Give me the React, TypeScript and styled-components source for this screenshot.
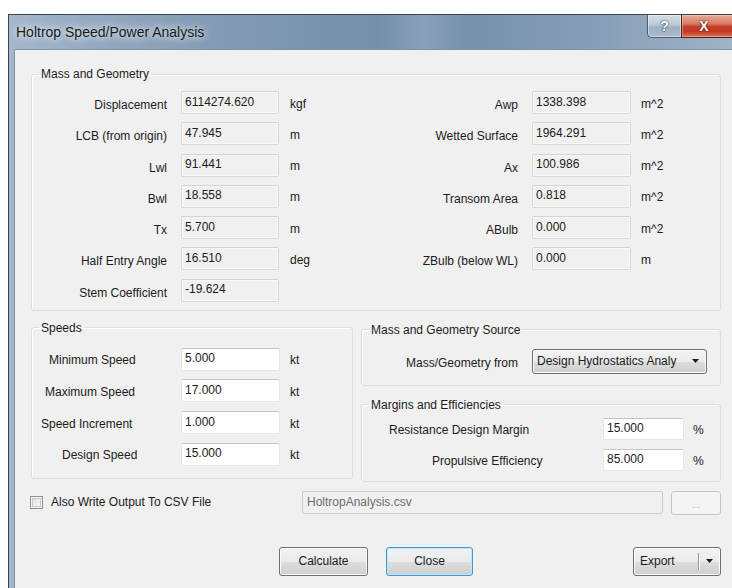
import React from "react";
import styled, { createGlobalStyle } from "styled-components";

const GlobalStyle = createGlobalStyle`
  html, body { margin: 0; padding: 0; background: #ffffff; }
  body {
    width: 732px;
    height: 588px;
    overflow: hidden;
    font-family: "Liberation Sans", Arial, sans-serif;
    font-size: 12px;
    color: #1b1b1b;
  }
  input, button { font-family: inherit; font-size: 12px; }
`;

const Desktop = styled.div`
  padding: 14px 0 0 8px;
  height: 574px;
  overflow: hidden;
`;

const Window = styled.div`
  width: 740px;
  height: 600px;
  border-top: 1px solid #3b434c;
  border-left: 1px solid #3b434c;
  background: linear-gradient(
    to right,
    #a4b8cc 0%,
    #93a9c0 12%,
    #8199b2 30%,
    #7690aa 50%,
    #88a0b8 56%,
    #7891ab 62%,
    #859db5 78%,
    #a2b6ca 100%
  );
  display: flex;
  flex-direction: column;
`;

const TitleBar = styled.div`
  height: 34px;
  display: flex;
  align-items: center;
  padding-left: 7px;
  flex: none;
`;

const Caption = styled.span`
  font-size: 14px;
  color: #1a1a1a;
  text-shadow: 0 0 6px rgba(255, 255, 255, 0.9), 0 0 12px rgba(255, 255, 255, 0.7);
  white-space: nowrap;
`;

const CaptionButtons = styled.div`
  margin-left: auto;
  margin-right: 12px;
  align-self: flex-start;
  display: flex;
`;

const HelpButton = styled.div`
  width: 34px;
  height: 23px;
  box-sizing: border-box;
  border: 1px solid #4f5e6e;
  border-top: none;
  border-right: none;
  border-bottom-left-radius: 5px;
  background: linear-gradient(#d6dee7 0%, #bac8d6 45%, #9eb0c2 55%, #a9bbcc 100%);
  box-shadow: inset 0 0 0 1px rgba(255, 255, 255, 0.45);
  display: flex;
  align-items: center;
  justify-content: center;
  color: #ffffff;
  font-weight: bold;
  font-size: 14px;
  text-shadow: 0 0 2px #2d3a48, 0 0 1px #2d3a48;
`;

const CloseButton = styled.div`
  width: 56px;
  height: 23px;
  box-sizing: border-box;
  border: 1px solid #5a1d12;
  border-top: none;
  background: linear-gradient(#e6ad9c 0%, #d77a62 40%, #c4402a 52%, #c23a22 75%, #d7765a 100%);
  box-shadow: inset 0 0 0 1px rgba(255, 220, 210, 0.4);
  display: flex;
  align-items: center;
  justify-content: center;
  padding-right: 10px;
  color: #ffffff;
  font-weight: bold;
  font-size: 14px;
  text-shadow: 0 0 2px #4a1208, 0 0 1px #4a1208;
`;

const Client = styled.div`
  margin-left: 5px;
  flex: 1;
  background: #f0f0f0;
  border-top: 1px solid #7f92a6;
  border-left: 1px solid #7f92a6;
`;

const Content = styled.div`
  width: 690px;
  padding: 17px 0 0 16px;
  display: flex;
  flex-direction: column;
`;

const Group = styled.fieldset<{ $pt: number; $pb: number }>`
  margin: 0;
  min-width: 0;
  padding: ${(p) => p.$pt}px 0 ${(p) => p.$pb}px;
  border: 1px solid #d5dfe5;
  border-radius: 3px;
  box-shadow: inset 1px 1px 0 #ffffff;
`;

const Legend = styled.legend`
  margin-left: 7px;
  padding: 0 2px;
  line-height: 14px;
  font-size: 12px;
  color: #1b1b1b;
`;

const GeoColumns = styled.div`
  display: flex;
  align-items: flex-start;
`;

const FieldGrid = styled.div<{ $label: number; $input: number; $unit: number; $rowGap: number }>`
  display: grid;
  grid-template-columns: ${(p) => p.$label}px ${(p) => p.$input}px ${(p) => p.$unit}px;
  row-gap: ${(p) => p.$rowGap}px;
  align-items: center;
`;

/* Right-aligned labels sit a little low against their boxes; indented ones are centred. */
const Label = styled.span<{ $indent?: number }>`
  white-space: nowrap;
  ${(p) =>
    p.$indent !== undefined
      ? `text-align: left; padding-left: ${p.$indent}px; padding-top: 2px;`
      : `text-align: right; padding-right: 14px; padding-top: 5px;`}
`;

const Unit = styled.span<{ $pad: number }>`
  padding-left: ${(p) => p.$pad}px;
  padding-top: 2px;
  white-space: nowrap;
`;

const Field = styled.input<{ $editable?: boolean; $h?: number }>`
  box-sizing: border-box;
  width: 100%;
  height: ${(p) => p.$h ?? 23}px;
  margin: 0;
  padding: 0 0 2px 3px;
  border: 1px solid ${(p) => (p.$editable ? "#e3e6ea" : "#d6d8da")};
  border-top-color: ${(p) => (p.$editable ? "#c2c5ca" : "#d0d2d4")};
  border-radius: 2px;
  background: ${(p) => (p.$editable ? "#ffffff" : "#f0f0f0")};
  box-shadow: ${(p) => (p.$editable ? "none" : "inset 0 0 0 1px #f7f7f7")};
  color: #1b1b1b;
  outline: none;
`;

const LowerRow = styled.div`
  display: flex;
  align-items: flex-start;
  margin-top: 10px;
`;

const SpeedsGroup = styled(Group)`
  width: 322px;
  box-sizing: border-box;
  flex: none;
`;

const RightColumn = styled.div`
  flex: 1;
  margin-left: 8px;
  margin-top: 2px;
  display: flex;
  flex-direction: column;
  gap: 12px;
`;

const SourceRow = styled.div`
  display: flex;
  align-items: center;
  justify-content: flex-end;
  padding-right: 13px;
  gap: 14px;
`;

const SourceLabel = styled.span`
  padding-top: 4px;
  white-space: nowrap;
`;

const Combo = styled.div`
  width: 175px;
  height: 25px;
  box-sizing: border-box;
  border: 1px solid #707070;
  border-radius: 3px;
  background: linear-gradient(#f2f2f2 0%, #ebebeb 50%, #dddddd 51%, #cfcfcf 100%);
  box-shadow: inset 0 0 0 1px #fafafa;
  display: flex;
  align-items: center;
  padding: 0 7px 1px 4px;
  gap: 6px;
`;

const ComboText = styled.span`
  flex: 1;
  white-space: nowrap;
`;

const CsvRow = styled.div`
  display: flex;
  align-items: center;
  margin-top: 8px;
`;

const Check = styled.span`
  width: 13px;
  height: 13px;
  box-sizing: border-box;
  margin-left: -1px;
  border: 1px solid #8e8f8f;
  background: linear-gradient(135deg, #dcdcdc 0%, #f2f2f2 70%, #fbfbfb 100%);
  box-shadow: inset 0 0 0 1px #f4f4f4, inset 0 0 0 2px #c9c9c9;
  flex: none;
`;

const CheckLabel = styled.span`
  margin-left: 8px;
  white-space: nowrap;
`;

const CsvField = styled.div`
  margin-left: auto;
  width: 361px;
  height: 23px;
  box-sizing: border-box;
  border: 1px solid #c9cbcd;
  border-radius: 2px;
  background: #f0f0f0;
  color: #6d6d6d;
  display: flex;
  align-items: center;
  padding: 0 0 1px 4px;
`;

const BrowseButton = styled.div`
  margin-left: 8px;
  width: 50px;
  height: 24px;
  box-sizing: border-box;
  border: 1px solid #c2c6c9;
  border-radius: 3px;
  background: #f4f4f4;
  color: #a8a8a8;
  font-size: 10px;
  display: flex;
  align-items: center;
  justify-content: center;
  padding-top: 3px;
  align-self: flex-start;
  margin-top: 1px;
`;

const ButtonRow = styled.div`
  display: flex;
  align-items: center;
  margin-top: 32px;
  padding-left: 248px;
`;

const PushButton = styled.div<{ $width: number; $default?: boolean }>`
  width: ${(p) => p.$width}px;
  height: 29px;
  box-sizing: border-box;
  border: 1px solid ${(p) => (p.$default ? "#3c9ad8" : "#707070")};
  border-radius: 3px;
  background: linear-gradient(#f2f2f2 0%, #ebebeb 50%, #dddddd 51%, #cfcfcf 100%);
  box-shadow: inset 0 0 0 1px ${(p) => (p.$default ? "#bfe5f8" : "#fbfbfb")};
  display: flex;
  align-items: center;
  justify-content: center;
  padding-bottom: 1px;
  & + & {
    margin-left: 18px;
  }
`;

const SplitButton = styled.div`
  margin-left: auto;
  width: 88px;
  height: 29px;
  box-sizing: border-box;
  border: 1px solid #707070;
  border-radius: 3px;
  background: linear-gradient(#f2f2f2 0%, #ebebeb 50%, #dddddd 51%, #cfcfcf 100%);
  box-shadow: inset 0 0 0 1px #fbfbfb;
  display: flex;
  align-items: stretch;
`;

const SplitLabel = styled.span`
  width: 64px;
  display: flex;
  align-items: center;
  padding-left: 6px;
  padding-bottom: 1px;
  box-sizing: border-box;
`;

const SplitDivider = styled.span`
  width: 1px;
  margin: 5px 0;
  background: #9a9a9a;
  box-shadow: 1px 0 0 #fafafa;
`;

const SplitArrow = styled.span`
  flex: 1;
  display: flex;
  align-items: center;
  justify-content: center;
`;

const DownArrow = () => (
  <svg width="7" height="4" viewBox="0 0 7 4">
    <path d="M0 0 H7 L3.5 4 Z" fill="#1b1b1b" />
  </svg>
);

const geoLeft: [string, string, string][] = [
  ["Displacement", "6114274.620", "kgf"],
  ["LCB (from origin)", "47.945", "m"],
  ["Lwl", "91.441", "m"],
  ["Bwl", "18.558", "m"],
  ["Tx", "5.700", "m"],
  ["Half Entry Angle", "16.510", "deg"],
  ["Stem Coefficient", "-19.624", ""],
];

const geoRight: [string, string, string][] = [
  ["Awp", "1338.398", "m^2"],
  ["Wetted Surface", "1964.291", "m^2"],
  ["Ax", "100.986", "m^2"],
  ["Transom Area", "0.818", "m^2"],
  ["ABulb", "0.000", "m^2"],
  ["ZBulb (below WL)", "0.000", "m"],
];

const speeds: [string, number, string][] = [
  ["Minimum Speed", 17, "5.000"],
  ["Maximum Speed", 13, "17.000"],
  ["Speed Increment", 9, "1.000"],
  ["Design Speed", 30, "15.000"],
];

const margins: [string, number, string][] = [
  ["Resistance Design Margin", 27, "15.000"],
  ["Propulsive Efficiency", 70, "85.000"],
];

export default function App() {
  return (
    <>
      <GlobalStyle />
      <Desktop>
        <Window>
          <TitleBar>
            <Caption>Holtrop Speed/Power Analysis</Caption>
            <CaptionButtons>
              <HelpButton>?</HelpButton>
              <CloseButton>X</CloseButton>
            </CaptionButtons>
          </TitleBar>
          <Client>
            <Content>
              <Group $pt={10} $pb={8}>
                <Legend>Mass and Geometry</Legend>
                <GeoColumns>
                  <FieldGrid $label={149} $input={98} $unit={50} $rowGap={8.3}>
                    {geoLeft.map(([label, value, unit]) => (
                      <React.Fragment key={label}>
                        <Label>{label}</Label>
                        <Field readOnly value={value} />
                        <Unit $pad={11}>{unit}</Unit>
                      </React.Fragment>
                    ))}
                  </FieldGrid>
                  <FieldGrid $label={203} $input={99} $unit={60} $rowGap={8.3}>
                    {geoRight.map(([label, value, unit]) => (
                      <React.Fragment key={label}>
                        <Label>{label}</Label>
                        <Field readOnly value={value} />
                        <Unit $pad={10}>{unit}</Unit>
                      </React.Fragment>
                    ))}
                  </FieldGrid>
                </GeoColumns>
              </Group>

              <LowerRow>
                <SpeedsGroup $pt={13} $pb={12}>
                  <Legend>Speeds</Legend>
                  <FieldGrid $label={149} $input={99} $unit={40} $rowGap={8.7}>
                    {speeds.map(([label, indent, value]) => (
                      <React.Fragment key={label}>
                        <Label $indent={indent}>{label}</Label>
                        <Field $editable defaultValue={value} />
                        <Unit $pad={10}>kt</Unit>
                      </React.Fragment>
                    ))}
                  </FieldGrid>
                </SpeedsGroup>

                <RightColumn>
                  <Group $pt={12} $pb={11}>
                    <Legend>Mass and Geometry Source</Legend>
                    <SourceRow>
                      <SourceLabel>Mass/Geometry from</SourceLabel>
                      <Combo>
                        <ComboText>Design Hydrostatics Analy</ComboText>
                        <DownArrow />
                      </Combo>
                    </SourceRow>
                  </Group>
                  <Group $pt={6} $pb={10}>
                    <Legend>Margins and Efficiencies</Legend>
                    <FieldGrid $label={241} $input={81} $unit={30} $rowGap={9}>
                      {margins.map(([label, indent, value]) => (
                        <React.Fragment key={label}>
                          <Label $indent={indent}>{label}</Label>
                          <Field $editable $h={22} defaultValue={value} />
                          <Unit $pad={9}>%</Unit>
                        </React.Fragment>
                      ))}
                    </FieldGrid>
                  </Group>
                </RightColumn>
              </LowerRow>

              <CsvRow>
                <Check />
                <CheckLabel>Also Write Output To CSV File</CheckLabel>
                <CsvField>HoltropAnalysis.csv</CsvField>
                <BrowseButton>...</BrowseButton>
              </CsvRow>

              <ButtonRow>
                <PushButton $width={89}>Calculate</PushButton>
                <PushButton $width={87} $default>
                  Close
                </PushButton>
                <SplitButton>
                  <SplitLabel>Export</SplitLabel>
                  <SplitDivider />
                  <SplitArrow>
                    <DownArrow />
                  </SplitArrow>
                </SplitButton>
              </ButtonRow>
            </Content>
          </Client>
        </Window>
      </Desktop>
    </>
  );
}
